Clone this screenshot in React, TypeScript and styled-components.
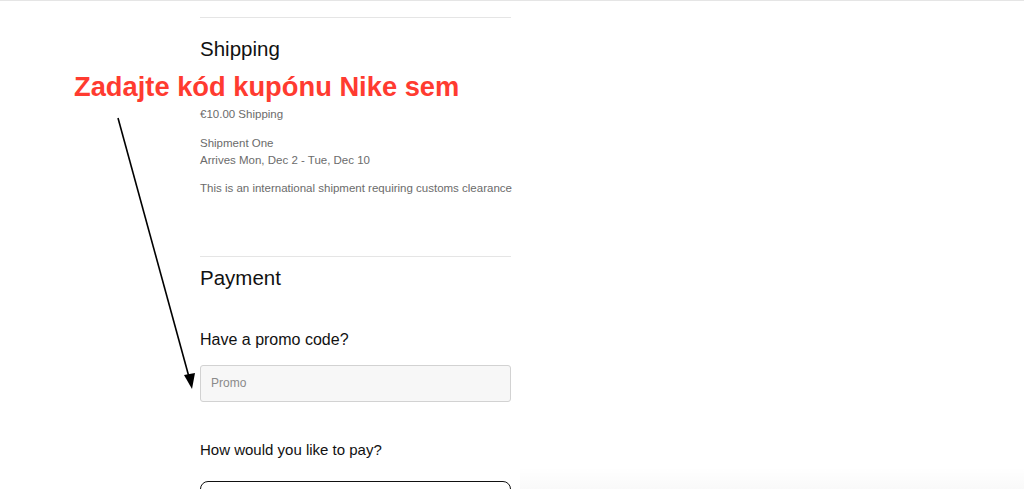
import React from 'react';
import styled, { createGlobalStyle } from 'styled-components';

// ─────────────────────────────────────────────────────────────────
// Global
// ─────────────────────────────────────────────────────────────────

const GlobalStyle = createGlobalStyle`
  html, body {
    margin: 0;
    padding: 0;
    background: #ffffff;
    font-family: "Liberation Sans", Arial, Helvetica, sans-serif;
    color: #111111;
  }
`;

// ─────────────────────────────────────────────────────────────────
// Styled Components
// ─────────────────────────────────────────────────────────────────

const Page = styled.div`
  position: relative;
  width: 1024px;
  height: 489px;
  overflow: hidden;
  border-top: 1px solid #e5e5e5;
  box-sizing: border-box;
`;

const Column = styled.main`
  display: flex;
  flex-direction: column;
  width: 311px;
  margin-left: 200px;
  padding-top: 16px;
`;

const Section = styled.section<{ $height: number }>`
  display: flex;
  flex-direction: column;
  height: ${(p) => p.$height}px;
  border-top: 1px solid #e5e5e5;
`;

const SectionTitle = styled.h2<{ $top: number }>`
  font-size: 20.5px;
  font-weight: 400;
  line-height: 24px;
  color: #111111;
  margin: ${(p) => p.$top}px 0 0 0;
`;

const Info = styled.p<{ $top: number }>`
  font-size: 11.5px;
  line-height: 17px;
  color: #6b6b6b;
  margin: ${(p) => p.$top}px 0 0 0;
  white-space: nowrap;
`;

const Label = styled.h3<{ $top: number }>`
  font-size: 16px;
  font-weight: 400;
  line-height: 20px;
  color: #111111;
  margin: ${(p) => p.$top}px 0 0 0;
`;

const PromoInput = styled.input`
  box-sizing: border-box;
  width: 311px;
  height: 40px;
  margin-top: 15px;
  padding: 0 10px;
  background: #f7f7f7;
  border: 1px solid #d2d2d2;
  border-radius: 3px;
  font-family: inherit;
  font-size: 12px;
  color: #111111;
  outline: none;

  &::placeholder {
    color: #8a8a8a;
  }
`;

const PayLabel = styled.h3`
  font-size: 15px;
  font-weight: 400;
  line-height: 20px;
  color: #111111;
  margin: 38px 0 0 0;
`;

const PayOption = styled.div`
  box-sizing: border-box;
  width: 311px;
  height: 40px;
  margin-top: 21px;
  border: 1px solid #111111;
  border-radius: 8px;
`;

const Annotation = styled.div`
  position: absolute;
  left: 74px;
  top: 70px;
  font-size: 27.3px;
  font-weight: 700;
  line-height: 32px;
  color: #ff3b30;
  white-space: nowrap;
`;

const ArrowLayer = styled.svg`
  position: absolute;
  left: 0;
  top: 0;
  pointer-events: none;
`;

const BottomFade = styled.div`
  position: absolute;
  left: 520px;
  right: 0;
  bottom: 0;
  height: 22px;
  background: linear-gradient(to bottom, rgba(0, 0, 0, 0), rgba(0, 0, 0, 0.025));
  pointer-events: none;
`;

// ─────────────────────────────────────────────────────────────────
// Component
// ─────────────────────────────────────────────────────────────────

const App: React.FC = () => {
  return (
    <>
      <GlobalStyle />
      <Page>
        <Column>
          {/* Shipping */}
          <Section $height={238}>
            <SectionTitle $top={19}>Shipping</SectionTitle>
            <Info $top={45}>€10.00 Shipping</Info>
            <Info $top={12}>
              Shipment One
              <br />
              Arrives Mon, Dec 2 - Tue, Dec 10
            </Info>
            <Info $top={11}>This is an international shipment requiring customs clearance</Info>
          </Section>

          {/* Payment */}
          <Section $height={260}>
            <SectionTitle $top={9}>Payment</SectionTitle>
            <Label $top={40}>Have a promo code?</Label>
            <PromoInput placeholder="Promo" />
            <PayLabel>How would you like to pay?</PayLabel>
            <PayOption />
          </Section>
        </Column>

        <Annotation>Zadajte kód kupónu Nike sem</Annotation>

        <ArrowLayer width="1024" height="489" viewBox="0 0 1024 489">
          <line x1="118" y1="117" x2="189" y2="376" stroke="#000" strokeWidth="1.6" />
          <polygon points="192,388 184,374 195,372" fill="#000" />
        </ArrowLayer>

        <BottomFade />
      </Page>
    </>
  );
};

export default App;
